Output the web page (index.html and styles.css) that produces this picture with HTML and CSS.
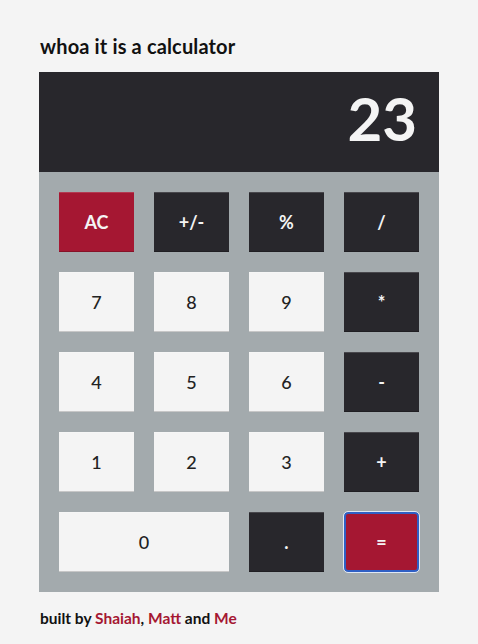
FILE: index.html
```html
<!DOCTYPE html>
<html>
<head>
<meta charset="utf-8">
<link rel="stylesheet" href="styles.css">
</head>
<body>
<main class="page">
  <h1 class="title">whoa it is a calculator</h1>
  <div class="calc">
    <div class="display">23</div>
    <div class="keys">
      <button class="key red">AC</button>
      <button class="key dark">+/-</button>
      <button class="key dark">%</button>
      <button class="key dark">/</button>
      <button class="key light">7</button>
      <button class="key light">8</button>
      <button class="key light">9</button>
      <button class="key dark">*</button>
      <button class="key light">4</button>
      <button class="key light">5</button>
      <button class="key light">6</button>
      <button class="key dark">-</button>
      <button class="key light">1</button>
      <button class="key light">2</button>
      <button class="key light">3</button>
      <button class="key dark">+</button>
      <button class="key light wide">0</button>
      <button class="key dark">.</button>
      <button class="key red focused">=</button>
    </div>
  </div>
  <p class="footer">built by <a href="#">Shaiah</a>, <a href="#">Matt</a> and <a href="#">Me</a></p>
</main>
</body>
</html>
```
FILE: styles.css
```css
html, body {
  margin: 0;
  padding: 0;
  background: #f4f4f4;
}
body {
  font-family: Lato, "Noto Sans", sans-serif;
  color: #111;
}
.page {
  padding: 35px 39px 0 39px;
  width: 400px;
}
.title {
  margin: 0 0 14px 1px;
  font-size: 20px;
  font-weight: 700;
  line-height: 23px;
  letter-spacing: 0.15px;
}
.calc {
  width: 400px;
}
.display {
  height: 100px;
  background: #28272c;
  color: #f4f4f4;
  font-family: Lato, sans-serif;
  font-size: 60px;
  font-weight: 700;
  line-height: 92px;
  text-align: right;
  padding-right: 22px;
  box-sizing: border-box;
}
.keys {
  background: #a3aaad;
  padding: 20px;
  display: grid;
  grid-template-columns: repeat(4, 75px);
  grid-auto-rows: 60px;
  gap: 20px;
}
.key {
  border: none;
  margin: 0;
  padding: 0;
  font-family: Lato, "Noto Sans", sans-serif;
  font-size: 18px;
  font-weight: 700;
  cursor: pointer;
  border-bottom: 1px solid rgba(0,0,0,0.18);
  border-top: 1px solid rgba(255,255,255,0.15);
}
.light {
  background: #f4f4f4;
  color: #222;
  font-weight: 500;
}
.dark {
  background: #28272c;
  color: #f4f4f4;
}
.red {
  background: #a51732;
  color: #f4f4f4;
}
.wide {
  grid-column: span 2;
}
.focused {
  border: 2px solid #2f5fc4;
  border-radius: 4px;
  outline: 1px solid #dfe8f5;
}
.footer {
  margin: 17px 0 0 1px;
  font-size: 15.5px;
  font-weight: 700;
}
.footer a {
  color: #a51732;
  text-decoration: none;
}
```
